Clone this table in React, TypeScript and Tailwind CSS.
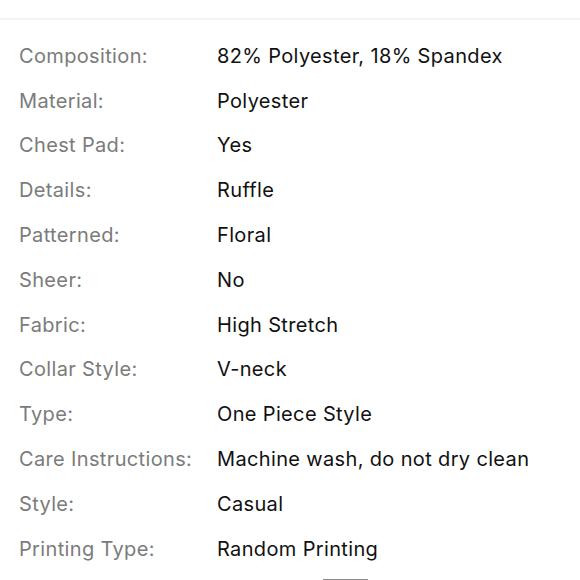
const specs: [string, string][] = [
  ["Composition:", "82% Polyester, 18% Spandex"],
  ["Material:", "Polyester"],
  ["Chest Pad:", "Yes"],
  ["Details:", "Ruffle"],
  ["Patterned:", "Floral"],
  ["Sheer:", "No"],
  ["Fabric:", "High Stretch"],
  ["Collar Style:", "V-neck"],
  ["Type:", "One Piece Style"],
  ["Care Instructions:", "Machine wash, do not dry clean"],
  ["Style:", "Casual"],
  ["Printing Type:", "Random Printing"],
];

export default function App() {
  return (
    <div className="flex h-[580px] w-[580px] flex-col overflow-hidden bg-white font-['Inter','Liberation_Sans',sans-serif]">
      <div className="mt-[18px] h-[2px] w-full bg-[#f3f3f3]" />
      <div className="flex flex-col pt-[13.5px]">
        {specs.map(([label, value]) => (
          <div key={label} className="flex h-[44.8px] items-center text-[20px] tracking-[0.35px]">
            <div className="w-[217px] shrink-0 pl-[19px] text-[#7b7b7b]">{label}</div>
            <div className="text-[#111111]">{value}</div>
          </div>
        ))}
      </div>
      <div className="mt-auto flex justify-center">
        <div className="ml-[110px] h-[1px] w-[45px] bg-[#8a8a8a]" />
      </div>
    </div>
  );
}
